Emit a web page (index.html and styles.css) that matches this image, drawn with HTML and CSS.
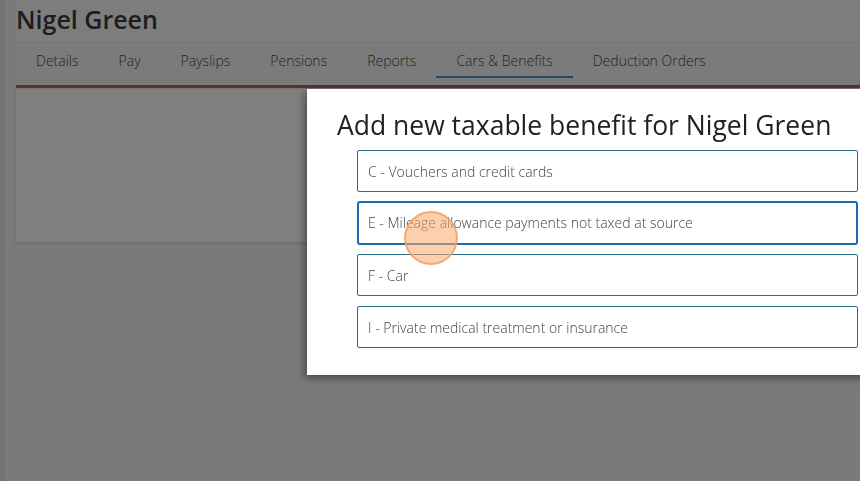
FILE: index.html
```html
<!DOCTYPE html>
<html>
<head>
<meta charset="utf-8">
<link rel="stylesheet" href="styles.css">
</head>
<body>
<div class="page">
  <div class="edge"></div>
  <main class="main">
    <header class="head"><h1 class="name">Nigel Green</h1></header>
    <nav class="tabs">
      <span class="tab">Details</span>
      <span class="tab">Pay</span>
      <span class="tab">Payslips</span>
      <span class="tab">Pensions</span>
      <span class="tab">Reports</span>
      <span class="tab active">Cars &amp; Benefits</span>
      <span class="tab">Deduction Orders</span>
    </nav>
    <div class="rule"></div>
    <section class="panel"></section>
  </main>
</div>
<div class="overlay"></div>
<div class="modal">
  <h2 class="modal-title">Add new taxable benefit for Nigel Green</h2>
  <div class="options">
    <div class="option">C - Vouchers and credit cards</div>
    <div class="option focused">E - Mileage allowance payments not taxed at source</div>
    <div class="option">F - Car</div>
    <div class="option">I - Private medical treatment or insurance</div>
  </div>
</div>
<div class="cursor"></div>
</body>
</html>
```
FILE: styles.css
```css
html, body {
  margin: 0;
  padding: 0;
  height: 100%;
  overflow: hidden;
}
body {
  background: #f4f4f4;
  font-family: "Open Sans", "DejaVu Sans", sans-serif;
}
.page {
  display: flex;
  height: 100%;
}
.edge {
  width: 5px;
  background: #e8e8e8;
  flex: none;
}
.main {
  flex: 1;
  margin-left: 11px;
  display: flex;
  flex-direction: column;
}
.head {
  height: 43px;
  background: #fafafa;
  border-bottom: 1px solid #ececec;
  box-sizing: border-box;
}
.name {
  margin: 0;
  padding-top: 3px;
  font-size: 25px;
  font-weight: 600;
  line-height: 32px;
  color: #3a3a3a;
}
.tabs {
  display: flex;
  height: 34px;
  margin-top: 1px;
  background: #f6f6f6;
}
.tab {
  padding: 3px 20px 0;
  font-size: 14px;
  font-weight: 300;
  line-height: 28px;
  color: #4a4a4a;
  border-bottom: 2px solid transparent;
}
.tab.active {
  border-bottom-color: #3a93d8;
}
.rule {
  margin-top: 7px;
  height: 3px;
  background: #ad6c58;
}
.panel {
  height: 153px;
  margin-top: 1px;
  background: #ffffff;
  box-shadow: 0 1px 4px rgba(0,0,0,0.15);
}
.overlay {
  position: fixed;
  inset: 0;
  background: rgba(0,0,0,0.5);
}
.modal {
  position: fixed;
  left: 307px;
  top: 89px;
  width: 600px;
  height: 286px;
  background: #ffffff;
  box-shadow: -2px 3px 8px rgba(0,0,0,0.45);
  box-sizing: border-box;
  padding: 16px 0 0 30px;
}
.modal-title {
  margin: 0;
  font-size: 26.5px;
  font-weight: 400;
  line-height: 40px;
  color: #222;
}
.options {
  margin: 5px 0 0 20px;
  width: 501px;
  display: flex;
  flex-direction: column;
  gap: 10px;
}
.option {
  height: 42px;
  box-sizing: border-box;
  border: 1px solid #2d6a86;
  border-radius: 2px;
  padding: 1px 10px 0;
  font-size: 14px;
  font-weight: 300;
  line-height: 39px;
  color: #444;
}
.option.focused {
  border: 2px solid #1f6aa8;
  border-radius: 3px;
  padding: 1px 9px 0;
  line-height: 37px;
  margin: -1px 0;
  height: 44px;
}
.cursor {
  position: fixed;
  left: 404px;
  top: 211px;
  width: 50px;
  height: 50px;
  border-radius: 50%;
  background: rgba(250, 170, 110, 0.55);
  border: 2px solid rgba(245, 160, 95, 0.8);
}
```
